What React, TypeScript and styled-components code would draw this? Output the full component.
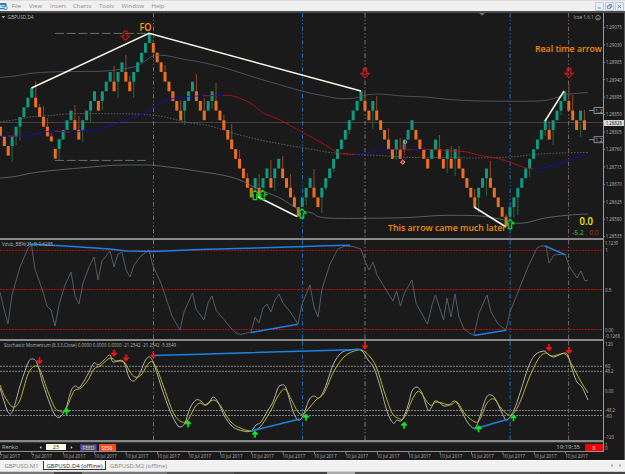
import React from "react";
import styled, { createGlobalStyle } from "styled-components";

const Global = createGlobalStyle`
  * { box-sizing: border-box; }
  html, body { margin: 0; padding: 0; background: #1a1a1a; overflow: hidden; }
  body { font-family: "Open Sans", "Noto Sans", sans-serif; }
`;

const Window = styled.div`
  width: 625px;
  height: 474px;
  display: flex;
  flex-direction: column;
  overflow: hidden;
`;
const MenuBar = styled.header`
  height: 11px;
  flex: none;
  display: flex;
  align-items: center;
  background: #f0f0f0;
  border-top: 1px solid #dcdcdc;
  color: #8b8b8b;
  font-size: 6px;
  line-height: 10px;
`;
const AppIcon = styled.svg`
  width: 8px;
  height: 8px;
  flex: none;
`;
const MenuItem = styled.span<{ $w: number }>`
  width: ${(p) => p.$w}px;
  flex: none;
  white-space: nowrap;
`;
const MenuItems = styled.nav`
  display: flex;
  flex: 1;
  padding-left: 3.5px;
`;
const WindowButtons = styled.div`
  display: flex;
  gap: 1px;
  padding-right: 1px;
`;
const WindowButton = styled.span`
  width: 9px;
  height: 9px;
  border: 1px solid #b9cbe0;
  border-radius: 1px;
  background: #e7f0fa;
  display: flex;
  align-items: center;
  justify-content: center;
  svg { width: 7px; height: 7px; flex: none; }
`;
const ChartFrame = styled.main`
  display: flex;
  flex-direction: column;
  flex: none;
  height: 449px;
  border-top: 2px solid #4b4d4d;
  border-right: 1px solid #555;
  background: #1a1a1a;
`;
const Pane = styled.section<{ $h: number }>`
  height: ${(p) => p.$h}px;
  flex: none;
  display: grid;
  grid-template-columns: 603px 21px;
`;
const Plot = styled.svg`
  display: block;
  width: 603px;
  height: 100%;
  overflow: hidden;
`;
const Scale = styled.svg`
  display: block;
  width: 21px;
  height: 100%;
  border-left: 1px solid #9a9a9a;
  overflow: hidden;
`;
const Splitter = styled.div`
  height: 2px;
  flex: none;
  width: 604px;
  background: #898989;
`;
const TradeRow = styled.section`
  height: 9px;
  flex: none;
  display: grid;
  grid-template-columns: 603px 21px;
`;
const TradeControls = styled.div`
  display: flex;
  align-items: center;
  height: 9px;
  font-size: 5.5px;
  line-height: 7px;
  color: #bdbdbd;
  border-top: 1px solid #3b3b3b;
`;
const IndicatorName = styled.span`
  width: 38px;
  padding-left: 2px;
`;
const Step = styled.svg`
  width: 4px;
  height: 5px;
`;
const Field = styled.span`
  width: 20px;
  height: 6.5px;
  margin: 0 4px;
  background: #ffffe8;
  color: #222;
  text-align: center;
  line-height: 6.5px;
`;
const Tag = styled.span<{ $bg: string; $w: number; $ml: number; $line: string; $fg: string }>`
  width: ${(p) => p.$w}px;
  margin-left: ${(p) => p.$ml}px;
  height: 7px;
  background: ${(p) => p.$bg};
  border: 0.6px solid ${(p) => p.$line};
  color: ${(p) => p.$fg};
  text-align: center;
  line-height: 6px;
  font-size: 5px;
`;
const Clock = styled.span`
  margin-left: auto;
  font-size: 6px;
`;
const TimeAxis = styled.svg`
  display: block;
  flex: none;
  width: 624px;
  height: 9px;
`;
const TabStrip = styled.footer`
  height: 12px;
  flex: none;
  display: flex;
  align-items: flex-start;
  background: #f1f1f1;
  border-top: 1px solid #f8f8f8;
  border-bottom: 1px solid #d0d0d0;
  color: #777;
  font-size: 6px;
  line-height: 9px;
`;
const Tab = styled.span<{ $w: number; $active?: boolean }>`
  width: ${(p) => p.$w}px;
  height: 9px;
  padding-top: 0.5px;
  text-align: center;
  white-space: nowrap;
  color: ${(p) => (p.$active ? "#222" : "#858585")};
  background: ${(p) => (p.$active ? "#fff" : "transparent")};
  border: solid ${(p) => (p.$active ? "#333" : "#999")};
  border-width: ${(p) => (p.$active ? "0 1px 1px 1px" : "0")};
`;
const TabScroll = styled.span`
  margin-left: auto;
  display: flex;
  gap: 6px;
  padding: 2px 3px 0 0;
  svg { width: 3px; height: 5px; }
`;
const StatusEdge = styled.div`
  flex: 1;
  background: linear-gradient(90deg, #777 0 54px, #444 54px 82px, #777 82px 167px, #555 167px 234px, #444 234px 327px, #aaa 327px 355px, #555 355px 540px, #444 540px);
`;

type Pt = [number, number];
const parse = (s: string): Pt[] => s.trim().split(/\s+/).map((p) => p.split(",").map(Number) as Pt);

/* Catmull-Rom path through the given points */
const curve = (s: string) => {
  const p = parse(s);
  let d = `M${p[0][0]} ${p[0][1]}`;
  for (let i = 0; i < p.length - 1; i++) {
    const a = p[Math.max(0, i - 1)], b = p[i], c = p[i + 1], e = p[Math.min(p.length - 1, i + 2)];
    d += `C${b[0] + (c[0] - a[0]) / 6} ${b[1] + (c[1] - a[1]) / 6} ${c[0] - (e[0] - b[0]) / 6} ${c[1] - (e[1] - b[1]) / 6} ${c[0]} ${c[1]}`;
  }
  return d;
};

const Line = ({ d, c, w = 0.8, dash }: { d: string; c: string; w?: number; dash?: string }) => (
  <path d={d} stroke={c} strokeWidth={w} strokeDasharray={dash} fill="none" />
);

const Label = ({ x, y, children, w, size = 5.5, fill = "#b4b4b4", font = "Open Sans", weight }: {
  x: number; y: number; children: string; w?: number; size?: number; fill?: string; font?: string; weight?: number;
}) => (
  <text x={x} y={y} fontSize={size} fill={fill} fontFamily={`"${font}", sans-serif`} fontWeight={weight}
    textLength={w} lengthAdjust="spacingAndGlyphs">{children}</text>
);

const sessions: [number, string, number][] = [
  [153.5, "#796868", 1], [302.5, "#1d66b5", 1.1], [365, "#5e5050", 1.6], [510.2, "#184c85", 1.7], [568.6, "#796868", 1],
];
const Sessions = ({ y1, y2 }: { y1: number; y2: number }) => (
  <>
    {sessions.map(([x, c, w]) => (
      <line key={x} x1={x} x2={x} y1={y1} y2={y2} stroke={c} strokeWidth={w} strokeDasharray="4.5 2.2 1.2 2.2 1.2 2.2" />
    ))}
  </>
);

/* Renko bricks: every brick sits one row above (U) or below (D) the previous one */
const PITCH = 3.92;
const ROW = 9.65;
const opening: [number, string][] = [
  [126.7, "D"], [136.4, "D"], [146, "D"], [136.4, "U"], [126.7, "U"], [117, "U"], [107.3, "U"], [97.7, "U"],
  [88, "U"], [97.7, "D"], [107.3, "D"], [117, "D"], [126.7, "D"], [136.4, "S"], [149, "D"], [139.2, "U"],
];
const moves =
  "UUUDDUUUUDUUUDUUDDUUUUU" + "DDDDDDDDUUUDDDUUDDDDDDDDDDUDUUDUUDDDDDUUUDDUUUUUUUUUUU" +
  "DDUDDDDDUDUUUDDDDUUDDUDUDDDDDUUUDDDDDUUUUUUUUUUDUUUUDDDUD";
const bricks: { x: number; y: number; k: string }[] = opening.map(([y, k], i) => ({ x: 0.4 + i * PITCH, y, k }));
{
  let row = 11;
  moves.split("").forEach((k, j) => {
    row += k === "U" ? -1 : 1;
    bricks.push({ x: 0.4 + (16 + j) * PITCH, y: 33.4 + row * ROW, k });
  });
}
const wicks: Record<number, number> = {
  3: 162, 4: 145, 5: 141, 9: 81, 10: 104, 11: 106, 12: 118, 13: 133, 15: 160, 19: 105, 20: 116, 21: 142, 23: 122,
  26: 110, 29: 66, 30: 98, 32: 55, 33: 76, 34: 98, 39: 40, 42: 65, 46: 100, 47: 125, 50: 74, 52: 98, 54: 109, 55: 83,
  57: 115, 59: 124, 61: 150, 63: 173, 65: 190, 66: 174, 69: 160, 70: 191, 72: 156, 74: 174, 75: 195, 78: 205, 80: 169,
  82: 213, 83: 190, 85: 172, 89: 134, 93: 90, 95: 129, 96: 96, 99: 128, 101: 160, 102: 138, 103: 152, 110: 158,
  112: 135, 114: 173, 115: 146, 116: 176, 117: 146, 121: 189, 122: 213, 124: 196, 125: 161, 127: 198, 129: 214,
  131: 218, 132: 215, 135: 177, 139: 136, 140: 121, 141: 145, 143: 115, 145: 84, 146: 95, 148: 137, 149: 110,
};

const Bricks = () => (
  <>
    {bricks.map((b, i) => {
      const up = b.k === "U";
      const h = b.k === "S" ? 5 : ROW;
      const end = wicks[i];
      return (
        <g key={i}>
          {end !== undefined && (
            <line x1={b.x} x2={b.x} y1={b.y + h / 2} y2={end} stroke={up ? "#245b36" : "#7c4223"} strokeWidth={1.2} />
          )}
          <rect x={b.x - 1.5} y={b.y} width={3} height={h} fill={up ? "#109a82" : "#ee6f21"} />
        </g>
      );
    })}
  </>
);

const BigArrow = ({ x, y, up, o = 1 }: { x: number; y: number; up?: boolean; o?: number }) => (
  <path transform={`translate(${x} ${y}) scale(1 ${up ? -1 : 1})`} opacity={o}
    d="M-1.7 -4.6H1.7V0.4H4L0 4.6L-4 0.4H-1.7Z" fill="none" stroke={up ? "#00e020" : "#e01010"} strokeWidth={1.2} />
);
const SmallArrow = ({ x, y, up }: { x: number; y: number; up?: boolean }) => (
  <path transform={`translate(${x} ${y}) scale(1 ${up ? -1 : 1})`}
    d="M0 -3.3V2.6M-2.6 -0.2L0 2.6L2.6 -0.2" fill="none" stroke={up ? "#00f020" : "#ff1010"} strokeWidth={1.7} />
);

const prices = ["1.29075", "1.29030", "1.28985", "1.28940", "1.28895", "1.28850", "1.28805", "1.28760", "1.28715", "1.28670", "1.28625", "1.28580", "1.28535"];

const PricePane = () => (
  <Pane $h={225}>
    <Plot viewBox="0 13 603 225">
      <line x1={0} x2={603} y1={122.5} y2={122.5} stroke="#414344" strokeWidth={1} />
      <Sessions y1={13} y2={238} />
      <Bricks />
      <Line c="#53606b" d={curve("0,77.5 15,76 30,73.5 50,72 80,71.5 105,71 125,68.5 138,65.5 148,59 153,56 165,55.5 185,59.5 200,62 225,68 260,79 302,91 325,96 340,98.5 357,97.8 362,95.5 380,94 402,96 425,97 450,99.5 482,101 538,101 555,98 566,94.5 588,92.5")} />
      <Line c="#64717c" d={curve("0,178 15,176.5 32,173 52,170.5 80,168 110,165.5 140,165 155,165.5 180,168.5 200,171.5 222,175 240,180 258,189 280,198 298,209 312,213 328,218 400,217.8 440,215.5 470,215.5 485,216.5 500,219 515,223 527,222.5 545,218 570,215 588,214")} />
      <Line c="#696c6c" dash="1.6 1.4" d={curve("0,122 20,119 30,117 50,115.6 73,113.7 135,114 150,115 165,117 185,122 210,126 240,135 270,142 310,149 330,152.5 355,154.5 380,155.5 410,157.5 440,157.5 475,158 510,157 535,154.5 560,153 588,152.5")} />
      <Line c="#0d0dce" d={curve("0,136.3 8,136 18,136.4 30,135.5 43,132.3 55,131 70,132 80,131.6 100,129 120,122 140,115 150,110 160,103 170,99 183,97 203,95.8 223,95.4")} />
      <Line c="#d40c0c" d="M8 136L18 136.4M55 131.3L70 132.4M203 95.8H216" />
      <Line c="#c80d0d" d={curve("223,95.4 233,96 250,103 263,113 268,115 280,120 302,132 320,142 337,152 347,154 355,154.3")} />
      <Line c="#0d0dce" d={curve("355,154.3 367,153 375,151 383,149.5 390,149.3")} />
      <Line c="#c80d0d" d={curve("390,149.3 400,149.7 415,149.7 425,149.3 440,150 455,151 467,152 480,155.5 490,157 500,159 510,162 520,166 527,168 533,168.4")} />
      <Line c="#0d0dce" d={curve("533,168.4 543,168 563,163 575,158 588,153.5")} />
      <Line c="#0d0dce" d="M410 149.7L425 149.3" />
      <Line c="#65765f" w={1} dash="9 2.7" d="M55 33.4H149M55 160.4H146" />
      <Line c="#f8f8e8" w={1.5} d="M31.5 88L149 33.4L361 91M258 197L297 216.5M474 207L506 227M545 121L564 91" />
      <BigArrow x={125.5} y={35.7} o={0.85} />
      <BigArrow x={365} y={73} />
      <BigArrow x={569} y={73} />
      <BigArrow x={255} y={195} up />
      <BigArrow x={262.5} y={195} up />
      <BigArrow x={302} y={213.5} up />
      <BigArrow x={510} y={224} up />
      <Line c="#b21717" dash="1.5 1" d="M404.5 144V160" />
      <circle cx={405.3} cy={142} r={1.5} fill="none" stroke="#aaa" strokeWidth={0.9} />
      <path d="M402.6 160L405 162L402.6 164.4L400.5 162Z" fill="#f41818" stroke="#fff" strokeWidth={0.6} />
      <path d="M1.5 16.2H5.1L3.3 18.1Z" fill="#ddd" />
      <path d="M479 13H485L482 15.8Z" fill="#687370" />
      <Label x={7.5} y={19} w={26}>GBPUSD,D4</Label>
      <Label x={139.5} y={31} w={12} size={10} fill="#ff9b0a" font="Open Sans" weight={600}>FO</Label>
      <Label x={535} y={52} w={67} size={9} fill="#f18b08" weight={600}>Real time arrow</Label>
      <Label x={388} y={230.7} w={118} size={9} fill="#f18b08" weight={600}>This arrow came much later</Label>
      <Label x={573.5} y={19.3} w={20} size={5.3}>Icoe 1.6.1</Label>
      <circle cx={598} cy={17.7} r={2.3} fill="none" stroke="#aaa" strokeWidth={0.7} />
      <path d="M597 17.2V17M599 17.2V17M596.8 18.3Q598 19.4 599.2 18.3" fill="none" stroke="#aaa" strokeWidth={0.6} />
      {[110.5, 139.7].map((y) => (
        <g key={y}>
          <path d={`M589 ${y}H594M603 ${y - 3}H594V${y + 3}H603`} fill="none" stroke="#aaa" strokeWidth={0.8} />
          <Label x={595.3} y={y + 2.1} w={7.4}>1.2</Label>
        </g>
      ))}
      <Label x={579.5} y={224.5} w={13.5} size={10} fill="#f4f400" weight={600}>0.0</Label>
      <Label x={572.5} y={234.5} w={11} size={6.2} fill="#37a81a" weight={600}>-5.2</Label>
      <Label x={589.5} y={234.5} w={9} size={6.2} fill="#b63217">0.0</Label>
    </Plot>
    <Scale viewBox="604 13 20 225">
      {prices.map((p, i) => (
        <g key={p}>
          <line x1={604} x2={605.2} y1={27.4 + i * 17.43} y2={27.4 + i * 17.43} stroke="#999" strokeWidth={0.7} />
          <Label x={605.7} y={29.3 + i * 17.43} w={16.2}>{p}</Label>
        </g>
      ))}
      <rect x={604} y={120} width={20} height={6} fill="#d6d6d6" />
      <Label x={605.7} y={125} w={16.2} fill="#222">1.28828</Label>
    </Scale>
  </Pane>
);

const VdubPane = () => (
  <Pane $h={99}>
    <Plot viewBox="0 240 603 99">
      <Line c="#b90808" dash="2 1" d="M0 250.3H603M0 289.5H603M0 329.5H603" w={1} />
      <Sessions y1={240} y2={339} />
      <Line c="#58636d" w={0.9} d={"M" + parse("0,292 4,309 8,324 12,295 20,267 28,248 31.5,245 35,269 43,292 47,306 51,310 55,326 59,305 65,285 71,272 75,296 79,304 83,283 89,267 94,257 98,280 102,261 110,251 114,267 118,254 122,252 126,270 130,277 134,265 141,256 149,250 153,266 161,283 172,316 180,330 184,312 192.5,293 196,309 204,320 208,303 212,296 216,310 231,328 236,333 241,334.5 251,332 255,317 259,323 263,308 267,304 271,312 275,300 279,294 283,303 291,313 298,324 302,304 310,285 314,307 318,317 322,289 330,264 338,249 345,246 353,246.5 361,249 365,261 369,270 373,262 377,275 385,288 393,301 396.5,291 400.5,306 404,294 412,280 416,303 427.5,324 432,305 435.5,295 443.5,320 447,298 451,317 455,294 459,317 464,329 469,333 474,335 479,313 487,295 491,312 498,324 506,330 510,312 518,292 528,267 537,248 541,246 546,246 549,263 554,255 565,254 569,266 573,272 577,278 581,271 585,281 588,280").map((p) => p.join(" ")).join("L")} />
      <Line c="#1683e8" w={1.5} d="M28 244L65 246L110 249L126 251L153 251.5L200 249.5L290 247L325 245.7L350 245.2M251 332.5L298 324.3M474 335.5L506 330.3M545 246L565 254.6" />
      <Label x={2} y={246} w={51}>Vdub_BB%(21;3) 0.6285</Label>
    </Plot>
    <Scale viewBox="604 240 20 99">
      <Label x={605} y={245} w={13}>1.1239</Label>
      <Label x={605} y={252.3}>1</Label>
      <Label x={605} y={291.5} w={6.5}>0.5</Label>
      <Label x={605} y={331.5} w={8.5}>0.00</Label>
      <Label x={605} y={338} w={15}>-0.1268</Label>
    </Scale>
  </Pane>
);

const StochasticPane = () => (
  <Pane $h={99}>
    <Plot viewBox="0 341 603 99">
      <Line c="#8f8f8f" w={0.9} dash="2 1" d="M0 366.3H603M0 371.3H603M0 410.5H603M0 415.5H603" />
      <Sessions y1={341} y2={440} />
      <Line c="#b7b7b7" w={0.95} d={curve("0,388 8,412 13,410 20,386 28,363 32,359 37,363 43,384 50,404 55,415 60,417 66,408 71,391 75,386 80,387 88,374 94,363 98,365 104,360 110,355 113,362 123,361 129,377 134,381 140,373 145,361 150,357 155,367 162,389 170,411 176,423 180,427 185,423 190,408 196,400 201,401 205,405 209,403 213,397 218,402 225,417 233,427 243,431 251,431 256,425 261,422 268,410 273,402 278,388 282,385 286,388 293,411 298,420 303,416 309,400 314,396 319,398 325,388 333,365 341,353 350,350 361,350 368,360 374,368 380,386 387,411 393,423 397,420 401,421 405,414 409,402 412,391 417,387 422,393 428,410 431,408 435,401 440,403 444,406 449,405 455,401 461,410 468,423 475,428 480,416 486,398 491,395 496,400 502,413 507,420 514,410 520,393 528,368 535,355 544,351 548,354 554,357 564,353 568,356 573,372 577,382 582,387 588,400")} />
      <Line c="#c2bd1c" w={0.95} d={curve("0,385 5,397 13,407 20,400 28,374 35,366 40,370 48,392 55,408 60,411 65,411 72,395 75,390 81,388 88,380 94,369 100,366 110,358 116,361 124,362 130,372 135,377 141,375 150,362 156,367 163,385 173,412 180,421 187,421 195,407 200,403 205,405 213,400 220,405 230,421 240,428 252,431 260,427 270,412 278,396 285,389 291,399 298,412 303,414 309,408 316,400 324,393 334,371 345,356 356,350.5 363,350.5 371,358 377,369 385,394 392,413 398,418 404,418 412,400 417,392 421,393 430,405 437,402 450,405 457,402 465,414 475,422 480,419 487,403 494,399 500,407 507,414 513,414 520,402 530,376 539,358 546,353 552,356 565,354 572,365 580,380 588,393")} />
      <Line c="#1683e8" w={1.5} d="M153 355.5L200 354.2L361 349.5M251 431L300 419M474 429L507 419.5" />
      {parse("39.5,360.5 114,353 126,357.7 153.3,354.7 365,345.7 549,347.3 569,350.3").map(([x, y]) => <SmallArrow key={x} x={x} y={y} />)}
      {parse("66.5,411.7 188,424 255,434.5 306,417.5 404,425.5 478.5,429 513.5,418").map(([x, y]) => <SmallArrow key={x} x={x} y={y} up />)}
      <Label x={4} y={347} w={172}>Stochastic Momentum (8,3,3,Close) 0.0000 0.0000 0.0000 -21.2542 -21.2542 -5.3849</Label>
    </Plot>
    <Scale viewBox="604 341 20 99">
      <Label x={605} y={346.3} w={8}>120</Label>
      <Label x={605} y={368} w={5.5}>60</Label>
      <Label x={605} y={373.3} w={8.5}>48.2</Label>
      <Label x={605} y={392.7} w={8.5}>0.00</Label>
      <Label x={605} y={412.3} w={10}>-48.2</Label>
      <Label x={605} y={417.6} w={7}>-60</Label>
      <Label x={605} y={438.8} w={9}>-120</Label>
    </Scale>
  </Pane>
);

export default function App() {
  return (
    <>
      <Global />
      <Window>
        <MenuBar>
          <AppIcon viewBox="0 0 8 8">
            <rect x="0" y="1" width="6.5" height="6.3" fill="#2b83c2" />
            <path d="M0 3H5V6H0Z" fill="#d8edf9" />
            <path d="M0.5 5L2 3.5L3 5L4.5 3.3" fill="none" stroke="#2871a8" strokeWidth=".7" />
            <path d="M4.2 4.3H7V7.3H4.2Z" fill="#eaf6ff" stroke="#2476b4" strokeWidth=".7" />
          </AppIcon>
          <MenuItems>
            {([["File", 17.5], ["View", 21], ["Insert", 23], ["Charts", 26], ["Tools", 22.5], ["Window", 30], ["Help", 20]] as [string, number][]).map(([t, w]) => (
              <MenuItem key={t} $w={w}>{t}</MenuItem>
            ))}
          </MenuItems>
          <WindowButtons>
            {["M1.8 5H4.8", "M2.7 1.5H5.6V4.2H4.4M1.4 2.8H4.3V5.4H1.4Z", "M1.8 1.8L5.2 5.2M5.2 1.8L1.8 5.2"].map((d) => (
              <WindowButton key={d}>
                <svg viewBox="0 0 7 7"><path d={d} fill="none" stroke="#6c7c90" strokeWidth="0.9" /></svg>
              </WindowButton>
            ))}
          </WindowButtons>
        </MenuBar>
        <ChartFrame>
          <PricePane />
          <Splitter />
          <VdubPane />
          <Splitter />
          <StochasticPane />
          <Splitter />
          <TradeRow>
            <TradeControls>
              <IndicatorName>Renko</IndicatorName>
              <Step viewBox="0 0 4 5"><path d="M3.4 1V4L1.6 2.5Z" fill="#ddd" /></Step>
              <Field>25</Field>
              <Step viewBox="0 0 4 5"><path d="M0.8 1V4L2.6 2.5Z" fill="#ddd" /></Step>
              <Tag $w={17} $ml={6} $bg="#626262" $line="#33339a" $fg="#c8c8c8">FEED</Tag>
              <Tag $w={17} $ml={1.5} $bg="#ff4910" $line="#ff4910" $fg="#fff">SESS</Tag>
              <Clock>19:19:35</Clock>
              <Tag $w={18} $ml={5} $bg="#f40000" $line="#f40000" $fg="#fff">X</Tag>
            </TradeControls>
            <Scale viewBox="604 442 20 9">
              <Label x={605} y={446.7} size={4.6}>1</Label>
              <Label x={605} y={450.3} size={4.6}>0</Label>
            </Scale>
          </TradeRow>
          <TimeAxis viewBox="0 451 624 9">
            <path d="M0 451.5H604" stroke="#909090" strokeWidth="1" />
            {Array.from({ length: 19 }, (_, i) => (
              <g key={i}>
                <path d={`M${i * 31.4 + 0.5} 451V454`} stroke="#909090" strokeWidth="0.8" />
                <Label x={i * 31.4 - (i < 1 ? 0.5 : 0)} y={458} w={i < 2 ? 20.5 : 22.7} size={5.2}>{i < 2 ? "7 Jul 2017" : "10 Jul 2017"}</Label>
              </g>
            ))}
          </TimeAxis>
        </ChartFrame>
        <TabStrip>
          <Tab $w={43}>GBPUSD,M1</Tab>
          <Tab $w={63} $active>GBPUSD,D4 (offline)</Tab>
          <Tab $w={65}>GBPUSD,M2 (offline)</Tab>
          <TabScroll>
            <svg viewBox="0 0 3 5"><path d="M2.5 .8V4.2L.8 2.5Z" fill="#888" /></svg>
            <svg viewBox="0 0 3 5"><path d="M.5 .8V4.2L2.2 2.5Z" fill="#888" /></svg>
          </TabScroll>
        </TabStrip>
        <StatusEdge />
      </Window>
    </>
  );
}
